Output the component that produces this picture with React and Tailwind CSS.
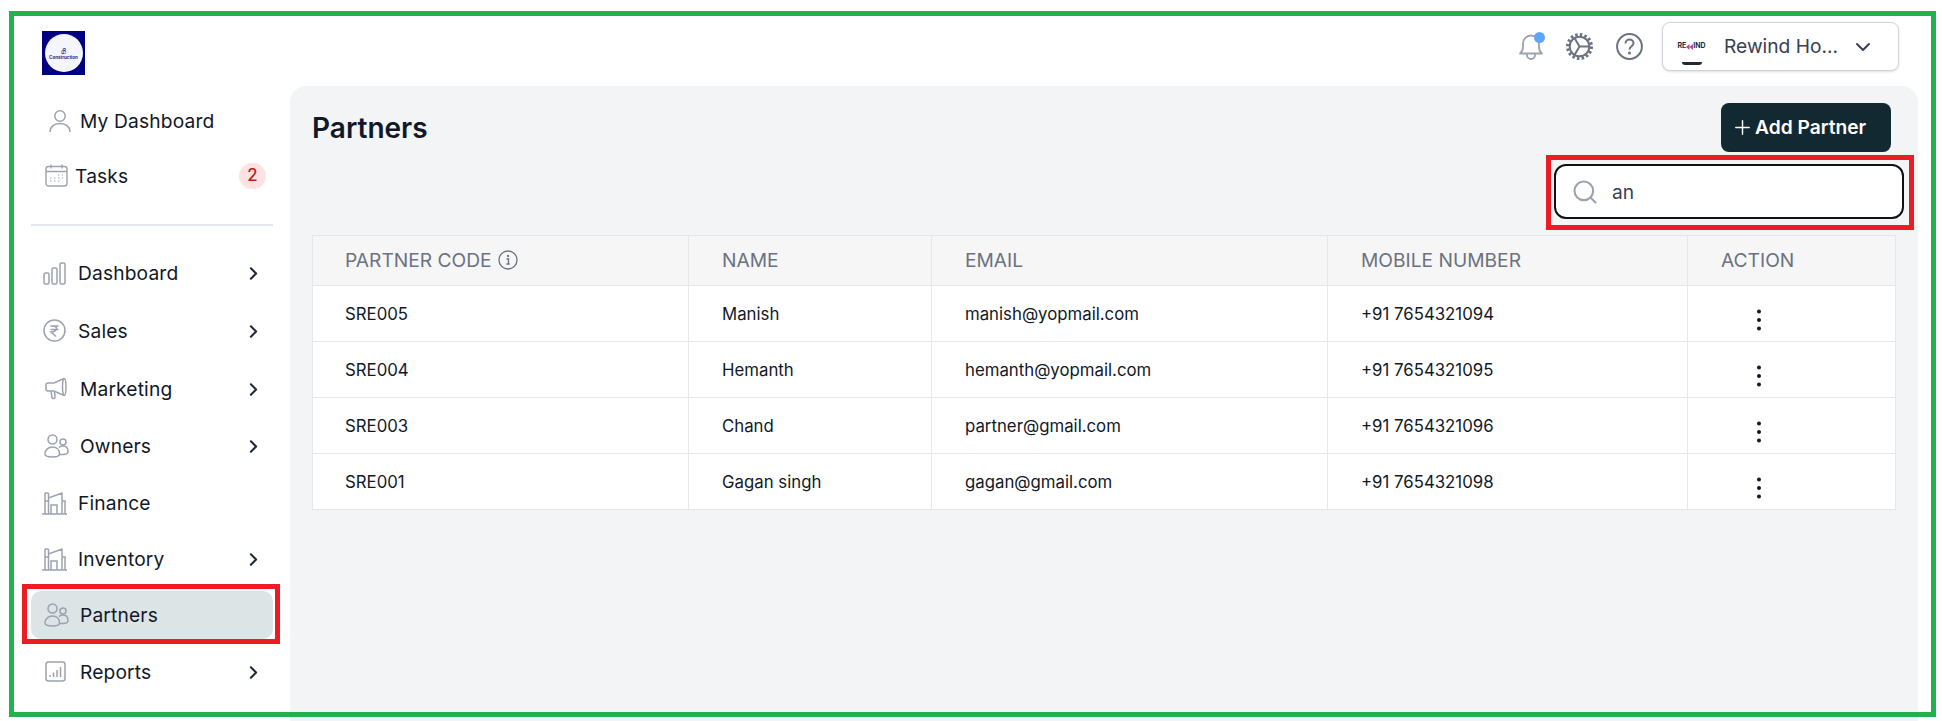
import { ChevronDown, ChevronRight, Plus, Search } from "lucide-react";

const UserIcon = () => (
  <svg width="22" height="24" viewBox="0 0 22 24" fill="none" stroke="#9ca3af" strokeWidth="1.5">
    <circle cx="11" cy="7" r="5.2" />
    <path d="M1 23c0-5 4-8.500 10-8.500S21 18 21 23" />
  </svg>
);

const CalendarIcon = () => (
  <svg width="23" height="23" viewBox="0 0 23 23" fill="none" stroke="#9ca3af" strokeWidth="1.4">
    <rect x="1" y="2.500" width="21" height="19.500" rx="2.500" />
    <path d="M1 7.500h21M6 0.500v4M17 0.500v4" />
    <path d="M5 17h2M9 17h2M13 17h2M13 14h2M17 14h1M9 14h2M17 11h1M13 11h2M5 14h2" strokeDasharray="1 0.600" strokeWidth="1" />
  </svg>
);

const BarsIcon = () => (
  <svg width="23" height="23" viewBox="0 0 23 23" fill="none" stroke="#9ca3af" strokeWidth="1.5">
    <rect x="1" y="11" width="5" height="11" rx="1.500" />
    <rect x="9" y="6" width="5" height="16" rx="1.500" />
    <rect x="17" y="1" width="5" height="21" rx="1.500" />
  </svg>
);

const RupeeIcon = () => (
  <svg width="23" height="23" viewBox="0 0 23 23" fill="none" stroke="#9ca3af" strokeWidth="1.5">
    <circle cx="11.500" cy="11.500" r="10.500" />
    <path d="M7.500 7h8M7.500 10.500h8M9 7c3.500 0 4.500 1.500 4.500 2.500S12 13 8 13l5 4.500" />
  </svg>
);

const MegaphoneIcon = () => (
  <svg width="23" height="23" viewBox="0 0 23 23" fill="none" stroke="#9ca3af" strokeWidth="1.5">
    <path d="M19 1.500 9 6H3a2 2 0 0 0-2 2v4a2 2 0 0 0 2 2h6l10 4.500c1.500 0 2-3.500 2-8.500s-.5-8.500-2-8.500Z" />
    <path d="M19 1.500c-1 1-1.500 4.500-1.500 8.500s.5 7.500 1.500 8.500M6 14l1 6.500c.3 1.500 3 1.500 3-.5l-.5-5.500" />
  </svg>
);

const PeopleIcon = () => (
  <svg width="25" height="24" viewBox="0 0 25 24" fill="none" stroke="#9ca3af" strokeWidth="1.5">
    <circle cx="8.500" cy="5.500" r="4.500" />
    <circle cx="19" cy="8" r="3" />
    <path d="M1 20c0-4.500 3.500-7 7.500-7s7 2.500 7 7c0 2-3 3-7 3s-7.500-1-7.500-3Z" />
    <path d="M15 13.500c1-1 2.500-1.500 4-1.500 3 0 5 2 5 5.500 0 2-2.500 3-5 3h-3.600" />
  </svg>
);

const BuildingIcon = () => (
  <svg width="25" height="24" viewBox="0 0 25 24" fill="none" stroke="#9ca3af" strokeWidth="1.5">
    <path d="M0 23h25M3 23V2M6.500 23V2M3 2h3.500M6.500 7 20 2v21M3 10h3.500M20 10h3v13M9 23V14h6v9" />
  </svg>
);

const ReportIcon = () => (
  <svg width="21" height="21" viewBox="0 0 21 21" fill="none" stroke="#9ca3af" strokeWidth="1.5">
    <rect x="1" y="1" width="19" height="19" rx="2.500" />
    <path d="M5 16v-2M8.500 16v-4.500M12 16V9M15.500 16V6" />
  </svg>
);

const BellIcon = () => (
  <svg width="26" height="27" viewBox="0 0 26 27" fill="none" stroke="#9ca3af" strokeWidth="1.800">
    <path d="M2 20.500c2-1.500 3-3 3-6.500V10.500a8 8 0 0 1 16 0V14c0 3.500 1 5 3 6.500Z" strokeLinejoin="round" />
    <path d="M9 21v1a4 4 0 0 0 8 0v-1" />
  </svg>
);

const GearIcon = () => (
  <svg width="27" height="27" viewBox="0 0 27 27" fill="none" stroke="#6b7280">
    <circle cx="13.500" cy="13.500" r="12" strokeWidth="3" strokeDasharray="2.500 2.210" />
    <circle cx="13.500" cy="13.500" r="9.800" strokeWidth="2" />
    <path d="M8.500 5 13.500 13.500H23.500M13.500 13.500 8.500 22" strokeWidth="2" />
  </svg>
);

const HelpIcon = () => (
  <svg width="27" height="27" viewBox="0 0 27 27" fill="none" stroke="#6b7280" strokeWidth="2">
    <circle cx="13.500" cy="13.500" r="12.400" />
    <path d="M9.500 10.500c0-2.500 2-4 4-4s4 1.500 4 3.700c0 3-4 3-4 6.300" />
    <circle cx="13.500" cy="20" r="0.600" fill="#6b7280" />
  </svg>
);

const InfoIcon = () => (
  <svg width="20" height="20" viewBox="0 0 20 20" fill="none" stroke="#6b7280" strokeWidth="1.300">
    <circle cx="10" cy="10" r="9" />
    <path d="M8.500 9h2v5M8.500 14h3.200" />
    <circle cx="10" cy="6" r="0.500" fill="#6b7280" />
  </svg>
);

const DotsIcon = () => (
  <svg width="24" height="24" viewBox="0 0 24 24" fill="#111827" className="ml-[26px] mt-[10px]">
    <circle cx="12" cy="3.500" r="2" />
    <circle cx="12" cy="12" r="2" />
    <circle cx="12" cy="20.500" r="2" />
  </svg>
);

const RewindArrows = () => (
  <svg width="7" height="6" viewBox="0 0 7 6" fill="#c0478b">
    <path d="M3.500 0v6L0 3ZM7 0v6L3.500 3Z" />
  </svg>
);

const navItems = [
  { label: "Dashboard", Icon: BarsIcon, row: "h-[57px]", pad: "pl-[12px]", gap: "ml-[12px]", arrow: true },
  { label: "Sales", Icon: RupeeIcon, row: "h-[58px]", pad: "pl-[12px]", gap: "ml-[12px]", arrow: true },
  { label: "Marketing", Icon: MegaphoneIcon, row: "h-[58px]", pad: "pl-[14px]", gap: "ml-[12px]", arrow: true },
  { label: "Owners", Icon: PeopleIcon, row: "h-[57px]", pad: "pl-[13px]", gap: "ml-[11px]", arrow: true },
  { label: "Finance", Icon: BuildingIcon, row: "h-[57px]", pad: "pl-[11px]", gap: "ml-[11px]" },
  { label: "Inventory", Icon: BuildingIcon, row: "h-[55px]", pad: "pl-[11px]", gap: "ml-[11px]", arrow: true },
  { label: "Partners", Icon: PeopleIcon, row: "h-[48px] mt-[4px] mb-[5px] rounded-[10px] bg-[#dce4e6]", pad: "pl-[13px]", gap: "ml-[11px]" },
  { label: "Reports", Icon: ReportIcon, row: "h-[56px]", pad: "pl-[14px]", gap: "ml-[14px]", arrow: true },
];

const partners = [
  ["SRE005", "Manish", "manish@yopmail.com", "+91 7654321094"],
  ["SRE004", "Hemanth", "hemanth@yopmail.com", "+91 7654321095"],
  ["SRE003", "Chand", "partner@gmail.com", "+91 7654321096"],
  ["SRE001", "Gagan singh", "gagan@gmail.com", "+91 7654321098"],
];

const headCell = "border border-[#e5e7eb] pl-[33px] first:pl-[32px] text-left text-[19.200px] font-normal text-[#6b7280]";
const bodyCell = "border border-[#e5e7eb] pl-[33px] pt-[2px] first:pl-[32px] text-[16.800px] text-[#111827]";

export default function App() {
  return (
    <div className="relative flex h-[721px] w-[1942px] flex-col overflow-hidden bg-white pl-[14px] pr-[6px] pt-[16px] font-['Inter',sans-serif]">
      <header className="flex h-[70px] shrink-0 items-start justify-between pl-[28px] pr-[37px]">
        <div className="mt-[15px] flex h-[44px] w-[43px] items-center justify-center bg-[#000080]">
          <div className="flex h-[38px] w-[38px] flex-col items-center justify-center overflow-hidden rounded-full bg-[#f5f6fb] pt-[3px] text-[#23238f]">
            <span className="text-[7px] font-bold leading-[7px]">ගි</span>
            <span className="text-[4.500px] font-bold leading-[6px]">Construction</span>
          </div>
        </div>
        <div className="mt-[6px] flex items-center">
          <div className="relative mt-[-1px] flex h-[49px] items-center">
            <BellIcon />
            <span className="absolute right-[-1px] top-[10px] h-[11px] w-[11px] rounded-full bg-[#60a5fa]" />
          </div>
          <div className="ml-[22px]">
            <GearIcon />
          </div>
          <div className="ml-[23px]">
            <HelpIcon />
          </div>
          <div className="ml-[19px] flex h-[49px] w-[237px] items-center rounded-[8px] border border-[#d1d5db] bg-white pl-[13px] shadow-sm">
            <div className="relative flex h-[36px] w-[31px] items-center justify-center overflow-hidden bg-white">
              <span className="flex items-center whitespace-nowrap text-[7px] font-bold text-[#1f2937]">
                RE
                <RewindArrows />
                IND
              </span>
              <span className="absolute bottom-0 left-[6px] h-[3px] w-[20px] rounded-b-full bg-[#1f2937]" />
            </div>
            <span className="ml-[17px] text-[19.200px] text-[#374151]">Rewind Ho...</span>
            <ChevronDown className="ml-[13px] text-[#374151]" size={24} strokeWidth={2} />
          </div>
        </div>
      </header>

      <div className="flex min-h-0 flex-1">
        <aside className="w-[276px] shrink-0 px-[17px] text-[19.200px] tracking-[0.15px] text-[#111827]">
          <div className="flex h-[55px] items-center pl-[18px] pt-[15px]">
            <UserIcon />
            <span className="ml-[9px]">My Dashboard</span>
          </div>
          <div className="flex h-[55px] items-center justify-between pl-[14px] pr-[7px] pt-[15px]">
            <div className="flex items-center">
              <CalendarIcon />
              <span className="ml-[7px]">Tasks</span>
            </div>
            <span className="flex h-[26px] w-[27px] items-center justify-center rounded-full bg-[#fee2e2] text-[16.800px] font-medium text-[#b91c1c]">
              2
            </span>
          </div>
          <div className="mb-[19px] mt-[28px] h-[2px] bg-[#e2e8f0]" />
          {navItems.map(({ label, Icon, row, pad, gap, arrow }) => (
            <div key={label} className={`flex items-center justify-between ${row} ${pad}`}>
              <div className="flex items-center">
                <Icon />
                <span className={gap}>{label}</span>
              </div>
              {arrow && <ChevronRight className="mr-[9px] text-[#1f2937]" size={21} strokeWidth={2.400} />}
            </div>
          ))}
        </aside>

        <main className="mr-[19px] flex-1 rounded-t-[16px] bg-[#f3f4f6] px-[22px] pt-[17px]">
          <div className="flex items-center justify-between pr-[5px]">
            <h1 className="text-[28px] font-semibold text-[#111827]">Partners</h1>
            <button
              type="button"
              className="flex h-[49px] w-[170px] items-center rounded-[8px] bg-[#122932] pl-[10px] text-[19.200px] font-semibold text-white"
            >
              <Plus size={23} strokeWidth={1.500} />
              <span className="ml-[1px]">Add Partner</span>
            </button>
          </div>
          <div className="mr-[-8px] mt-[12px] flex justify-end">
            <div className="flex h-[55px] w-[350px] items-center rounded-[12px] border-2 border-[#111111] bg-white pl-[15px]">
              <Search className="text-[#9ca3af]" size={28} strokeWidth={1.800} />
              <input
                readOnly
                value="an"
                className="ml-[13px] w-[280px] bg-transparent pt-[2px] text-[19.200px] text-[#374151] outline-none"
              />
            </div>
          </div>
          <table className="mt-[16px] w-[1583px] table-fixed border-collapse bg-white">
            <colgroup>
              <col className="w-[376px]" />
              <col className="w-[243px]" />
              <col className="w-[396px]" />
              <col className="w-[360px]" />
              <col className="w-[208px]" />
            </colgroup>
            <thead>
              <tr className="h-[50px] bg-[#f6f6f7]">
                <th className={headCell}>
                  <span className="flex items-center gap-[6px]">
                    PARTNER CODE <InfoIcon />
                  </span>
                </th>
                <th className={headCell}>NAME</th>
                <th className={headCell}>EMAIL</th>
                <th className={headCell}>MOBILE NUMBER</th>
                <th className={headCell}>ACTION</th>
              </tr>
            </thead>
            <tbody>
              {partners.map((p) => (
                <tr key={p[0]} className="h-[56px]">
                  {p.map((value) => (
                    <td key={value} className={bodyCell}>
                      {value}
                    </td>
                  ))}
                  <td className={bodyCell}>
                    <DotsIcon />
                  </td>
                </tr>
              ))}
            </tbody>
          </table>
        </main>
      </div>

      {/* annotation frames drawn on top of the screenshot */}
      <div className="pointer-events-none absolute left-[9px] top-[11px] h-[706px] w-[1927px] border-[5px] border-[#22b14c]" />
      <div className="pointer-events-none absolute left-[22px] top-[584px] h-[60px] w-[258px] border-[5px] border-[#ed1c24]" />
      <div className="pointer-events-none absolute left-[1546px] top-[155px] h-[75px] w-[368px] border-[5px] border-[#ed1c24]" />
    </div>
  );
}
